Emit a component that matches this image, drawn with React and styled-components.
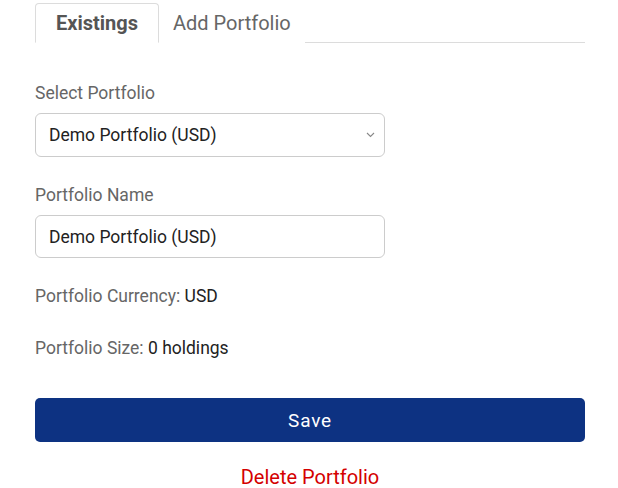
import React, { useState } from "react";
import styled, { createGlobalStyle } from "styled-components";

const GlobalStyle = createGlobalStyle`
    body {
        margin: 0;
        background: #fff;
        font-family: Roboto, "Liberation Sans", Arial, sans-serif;
    }
`;

export default function App() {
    const [tab, setTab] = useState("existings");
    const [name, setName] = useState("Demo Portfolio (USD)");

    return (
        <Page>
            <GlobalStyle />
            <TabBar>
                <Tab active={tab === "existings"} onClick={() => setTab("existings")}>
                    Existings
                </Tab>
                <Tab active={tab === "add"} onClick={() => setTab("add")}>
                    Add Portfolio
                </Tab>
            </TabBar>
            <Form>
                <Field>
                    <Label>Select Portfolio</Label>
                    <SelectWrap>
                        <Select defaultValue="demo">
                            <option value="demo">Demo Portfolio (USD)</option>
                        </Select>
                        <Chevron width="9" height="6" viewBox="0 0 9 6">
                            <path d="M1 1l3.5 3.5L8 1" fill="none" stroke="#888" strokeWidth="1.1" />
                        </Chevron>
                    </SelectWrap>
                </Field>
                <Field>
                    <Label>Portfolio Name</Label>
                    <Input value={name} onChange={(e) => setName(e.target.value)} />
                </Field>
                <Info>
                    Portfolio Currency: <Value>USD</Value>
                </Info>
                <Info>
                    Portfolio Size: <Value>0 holdings</Value>
                </Info>
                <SaveButton>Save</SaveButton>
                <DeleteLink>Delete Portfolio</DeleteLink>
            </Form>
        </Page>
    );
}

const Page = styled.div`
    width: 550px;
    padding: 3px 0 0 35px;
`;

const TabBar = styled.div`
    display: flex;
    border-bottom: 1px solid #dcdcdc;
`;

const Tab = styled.div`
    height: 38px;
    display: flex;
    align-items: center;
    padding: 0 ${(p) => (p.active ? "20px" : "13px")};
    margin-bottom: -1px;
    font-size: 20px;
    font-weight: ${(p) => (p.active ? 700 : 400)};
    color: ${(p) => (p.active ? "#555" : "#666")};
    background: #fff;
    border: 1px solid ${(p) => (p.active ? "#dcdcdc" : "transparent")};
    border-bottom-color: ${(p) => (p.active ? "#fff" : "transparent")};
    border-radius: 4px 4px 0 0;
    cursor: pointer;
`;

const Form = styled.div`
    display: flex;
    flex-direction: column;
    padding-top: 40px;
`;

const Field = styled.div`
    display: flex;
    flex-direction: column;
    gap: 10px;
    margin-bottom: 28px;
`;

const Label = styled.label`
    font-size: 17.5px;
    line-height: 20px;
    color: #666;
`;

const SelectWrap = styled.div`
    position: relative;
    width: 350px;
`;

const Select = styled.select`
    appearance: none;
    width: 350px;
    height: 44px;
    padding: 0 13px;
    font-family: Roboto, "Liberation Sans", Arial, sans-serif;
    font-size: 17.5px;
    color: #222;
    background: #fff;
    border: 1px solid #ccc;
    border-radius: 6px;
    outline: none;
`;

const Chevron = styled.svg`
    position: absolute;
    right: 10px;
    top: 19px;
    pointer-events: none;
`;

const Input = styled.input`
    box-sizing: border-box;
    width: 350px;
    height: 43px;
    padding: 0 13px;
    font-family: Roboto, "Liberation Sans", Arial, sans-serif;
    font-size: 17.5px;
    color: #222;
    background: #fff;
    border: 1px solid #ccc;
    border-radius: 6px;
    outline: none;
`;

const Info = styled.div`
    font-size: 17.5px;
    line-height: 21px;
    color: #666;
    margin-bottom: 31px;
`;

const Value = styled.span`
    color: #222;
`;

const SaveButton = styled.button`
    margin-top: 8px;
    height: 44px;
    width: 100%;
    font-family: Roboto, "Liberation Sans", Arial, sans-serif;
    font-size: 19px;
    font-weight: 400;
    letter-spacing: 0.8px;
    color: #fff;
    background: #0d3282;
    border: none;
    border-radius: 5px;
    cursor: pointer;
`;

const DeleteLink = styled.a`
    margin-top: 24px;
    text-align: center;
    font-size: 20px;
    line-height: 22px;
    color: #d40000;
    cursor: pointer;
`;
